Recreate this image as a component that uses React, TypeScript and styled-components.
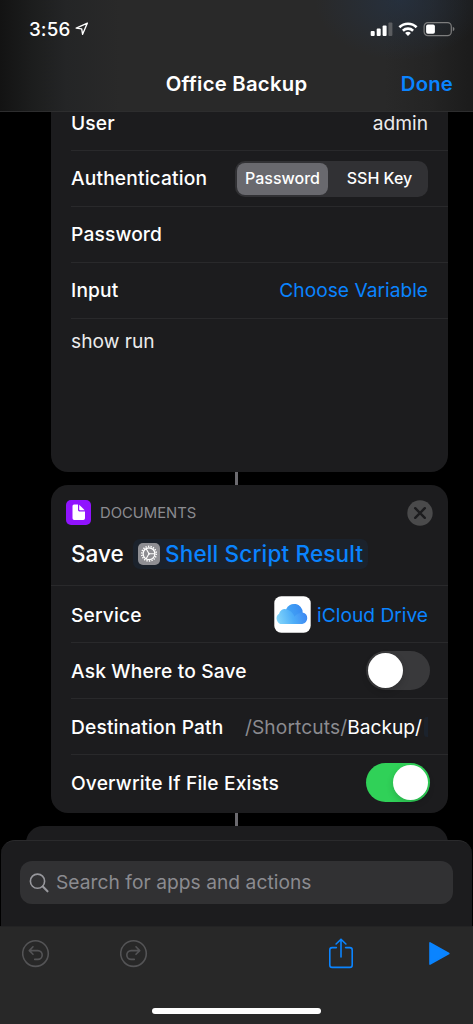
import React from "react";
import styled, { createGlobalStyle } from "styled-components";

const GlobalStyle = createGlobalStyle`
  * { box-sizing: border-box; }
  body { margin: 0; background: #000; }
`;

const Screen = styled.div`
  width: 473px;
  height: 1024px;
  overflow: hidden;
  display: flex;
  flex-direction: column;
  background: #000;
  color: #fff;
  font-family: Inter, "Liberation Sans", sans-serif;
  font-size: 19px;
`;

const Text = styled.span<{ $size?: number; $weight?: number; $track?: number; $color?: string; $lift?: number }>`
  font-size: ${(p) => p.$size ?? 19.2}px;
  font-weight: ${(p) => p.$weight ?? 400};
  letter-spacing: ${(p) => p.$track ?? 0}px;
  color: ${(p) => p.$color ?? "#fff"};
  line-height: 24px;
  padding-bottom: ${(p) => p.$lift ?? 0}px;
  white-space: pre;
`;

const Label = styled(Text).attrs({ $weight: 500, $track: 0.15 })``;

const Header = styled.header`
  height: 112px;
  flex: none;
  border-bottom: 1px solid #2d2d2e;
  background:
    radial-gradient(ellipse 85px 60px at 400px 0, rgba(37, 52, 72, 0.65), rgba(37, 52, 72, 0)),
    linear-gradient(90deg, #131313 0, #1c1d1d 32px, #242526 66px, #292929 120px, #292929 385px, #242424 430px, #1b1b1b 473px);
`;

const StatusBar = styled.div`
  height: 57px;
  padding: 1px 18px 0 29px;
  display: flex;
  align-items: center;
`;

const Clock = styled(Text)`
  padding-top: 2px;
`;

const LocationIcon = styled.svg`
  margin-left: 5px;
`;

const StatusIcons = styled.div`
  margin-left: auto;
  display: flex;
  align-items: center;
  gap: 5px;
`;

const NavBar = styled.nav`
  height: 53px;
  padding: 0 20px;
  display: grid;
  grid-template-columns: 80px 1fr 80px;
  align-items: center;
  text-align: center;
`;

const Done = styled.button`
  all: unset;
  text-align: right;
`;

const Editor = styled.main`
  height: 743px;
  flex: none;
  overflow: hidden;
  padding-right: 25px;
  display: flex;
  flex-direction: column;
`;

const Card = styled.section<{ $joined?: boolean }>`
  flex: none;
  margin-left: 51px;
  background: #1c1c1e;
  border-radius: ${(p) => (p.$joined ? "0 0 17px 17px" : "17px")};
`;

const NextCard = styled.section`
  flex: none;
  margin-left: 26px;
  height: 60px;
  background: #1c1c1e;
  border-radius: 17px;
`;

const Connector = styled.div`
  flex: none;
  width: 3px;
  height: 13px;
  margin-left: 235px;
  background: #6b6a6f;
`;

const Row = styled.div<{ $height: number; $last?: boolean; $right?: number; $top?: number; $bottom?: number }>`
  height: ${(p) => p.$height}px;
  margin-left: 20px;
  padding: ${(p) => p.$top ?? 0}px ${(p) => p.$right ?? 20}px ${(p) => p.$bottom ?? 0}px 0;
  display: flex;
  align-items: center;
  justify-content: space-between;
  border-bottom: ${(p) => (p.$last ? "none" : "1px solid #29292b")};
`;

const ScriptBody = styled.div`
  height: 153px;
  padding: 10px 20px;
`;

const Segmented = styled.div`
  width: 193px;
  height: 36px;
  padding: 2px;
  display: grid;
  grid-template-columns: 91px 1fr;
  column-gap: 5px;
  border-radius: 10px;
  background: #313134;
`;

const Segment = styled.button<{ $active?: boolean }>`
  all: unset;
  display: flex;
  align-items: center;
  justify-content: center;
  border-radius: 8px;
  background: ${(p) => (p.$active ? "#69696e" : "transparent")};
`;

const ActionHead = styled.div`
  height: 101px;
  padding: 15px 15px 0;
  border-bottom: 1px solid #29292b;
`;

const ActionTitle = styled.div`
  height: 25px;
  display: flex;
  align-items: center;
  gap: 9px;
`;

const CloseIcon = styled.svg`
  margin-left: auto;
`;

const ActionSummary = styled.div`
  height: 30px;
  margin-top: 14px;
  padding-left: 5px;
  display: flex;
  align-items: center;
  justify-content: space-between;
  width: 302px;
`;

const VariableToken = styled.span`
  height: 30px;
  width: 235px;
  padding-left: 5px;
  display: flex;
  align-items: center;
  gap: 5px;
  border-radius: 7px;
  background: #1b222c;
`;

const Service = styled.div`
  display: flex;
  align-items: center;
  gap: 6px;
`;

const AppIcon = styled.svg`
  display: block;
  flex: none;
`;

const PathField = styled.div`
  display: flex;
  align-items: center;
`;

const Caret = styled.span`
  width: 4px;
  height: 20px;
  margin-left: 2px;
  border-radius: 3px 0 0 3px;
  background: #1b222c;
`;

const Switch = styled.button<{ $on?: boolean }>`
  all: unset;
  box-sizing: border-box;
  width: 64px;
  height: 39px;
  padding: 2px;
  display: flex;
  justify-content: ${(p) => (p.$on ? "flex-end" : "flex-start")};
  border-radius: 20px;
  background: ${(p) => (p.$on ? "#30d158" : "#39393b")};
`;

const Knob = styled.span`
  width: 35px;
  height: 35px;
  border-radius: 50%;
  background: #fff;
  box-shadow: 0 3px 7px rgba(0, 0, 0, 0.16);
`;

const Footer = styled.footer`
  position: relative;
  flex: none;
  margin-top: -15px;
`;

const Drawer = styled.div`
  height: 86px;
  padding: 20px 19px 0;
  margin: 0 1px;
  background: #1c1c1e;
  border-top: 1px solid #2a2a2c;
  border-radius: 14px 14px 0 0;
`;

const Search = styled.div`
  height: 43px;
  padding-left: 9px;
  display: flex;
  align-items: center;
  gap: 7px;
  border-radius: 12px;
  background: #313133;
`;

const Toolbar = styled.div`
  height: 98px;
  background: #282828;
  border-top: 1px solid #232324;
`;

const Tools = styled.div`
  height: 54px;
  padding: 0 22px;
  display: flex;
  align-items: center;
`;

const Tool = styled.svg<{ $gap?: number }>`
  display: block;
  margin-left: ${(p) => p.$gap ?? 0}px;
`;

const HomeIndicator = styled.div`
  width: 169px;
  height: 6px;
  margin: 27px auto 0;
  border-radius: 3px;
  background: #fff;
`;

const BLUE = "#0a84ff";

function Toggle({ on }: { on?: boolean }) {
  return (
    <Switch $on={on} role="switch" aria-checked={!!on}>
      <Knob />
    </Switch>
  );
}

function Status() {
  return (
    <StatusBar>
      <Clock $size={18.8} $weight={500} $track={0.1}>3:56</Clock>
      <LocationIcon width="14" height="14" viewBox="0 0 14 14" fill="none" stroke="#fff" strokeWidth="1.35" strokeLinejoin="round">
        <path d="M12.4 1.1 1.2 6.2 6.7 6.9 7.6 12.3Z" />
      </LocationIcon>
      <StatusIcons>
        <svg width="23" height="16" viewBox="0 0 23 16">
          <rect x="0.7" y="10" width="4" height="5" rx="1" fill="#fff" />
          <rect x="6.7" y="7.5" width="4" height="7.5" rx="1" fill="#fff" />
          <rect x="12.6" y="4.4" width="4" height="10.6" rx="1" fill="#fff" />
          <rect x="18.4" y="1.4" width="4" height="13.6" rx="1" fill="#5b5d60" />
        </svg>
        <svg width="20" height="16" viewBox="0 0 20 16" fill="none" stroke="#fff" strokeWidth="2.6">
          <path d="M1.4 6.2C6.2 1.5 13.8 1.5 18.6 6.2" />
          <path d="M4.9 9.7C7.8 6.9 12.2 6.9 15.1 9.7" />
          <path d="M7.1 11.9C8.8 10.5 11.2 10.5 12.9 11.9L10 14.9Z" fill="#fff" stroke="none" />
        </svg>
        <svg width="32" height="16" viewBox="0 0 32 16">
          <rect x="1.1" y="1.6" width="27.2" height="13" rx="3.8" fill="none" stroke="#7d7d7d" strokeWidth="1.2" />
          <rect x="3.1" y="3.5" width="8.8" height="9.3" rx="1.8" fill="#fff" />
          <path d="M29.8 5.8Q31.5 6.5 31.5 8T29.8 10.3Z" fill="#7d7d7d" />
        </svg>
      </StatusIcons>
    </StatusBar>
  );
}

function GearIcon() {
  return (
    <AppIcon width="22" height="22" viewBox="0 0 22 22" fill="none" stroke="#fff">
      <rect width="22" height="22" rx="5" fill="#8e8e93" stroke="none" />
      <circle cx="11" cy="10.7" r="7.3" strokeWidth="1.6" strokeDasharray="1.3 1.248" />
      <circle cx="11" cy="10.7" r="5.9" strokeWidth="1.3" />
      <path d="M11 10.7H17M11 10.7 8 5.5M11 10.7 8 15.9" strokeWidth="1.1" />
      <circle cx="11" cy="10.7" r="1" fill="#fff" stroke="none" />
    </AppIcon>
  );
}

function CloudIcon() {
  return (
    <AppIcon width="37" height="37" viewBox="0 0 37 37">
      <defs>
        <linearGradient id="cloud" x1="0" y1="0.7" x2="1" y2="0.5">
          <stop offset="0" stopColor="#83d5fa" />
          <stop offset="0.5" stopColor="#4eaef8" />
          <stop offset="1" stopColor="#3d86f2" />
        </linearGradient>
      </defs>
      <rect x="0.3" y="0.3" width="36.4" height="36.4" rx="7" fill="#fff" />
      <path d="M9 28A5.6 5.6 0 0 1 5.1 17.8 5.5 5.5 0 0 1 12.2 13.3 8.5 8.5 0 0 1 28.6 16.4 5.9 5.9 0 0 1 28.2 28Z" fill="url(#cloud)" />
      <path d="M12.2 13.3A8.5 8.5 0 0 1 28.6 16.4Q23 17 20.5 20.5 18 14.8 12.2 13.3Z" fill="#2b86ee" opacity="0.35" />
    </AppIcon>
  );
}

export default function App() {
  return (
    <>
      <GlobalStyle />
      <Screen>
        <Header>
          <Status />
          <NavBar>
            <span />
            <Text $size={20.3} $weight={600} $track={0.26}>Office Backup</Text>
            <Done><Text $size={20.3} $weight={600} $track={0.2} $color={BLUE}>Done</Text></Done>
          </NavBar>
        </Header>

        <Editor>
          <Card $joined>
            <Row $height={39} $bottom={17}>
              <Label>User</Label>
              <Text $color="#ebebec">admin</Text>
            </Row>
            <Row $height={56}>
              <Label $lift={2}>Authentication</Label>
              <Segmented>
                <Segment $active><Text $size={16} $weight={500} $lift={2}>Password</Text></Segment>
                <Segment><Text $size={16} $weight={500} $lift={2}>SSH Key</Text></Segment>
              </Segmented>
            </Row>
            <Row $height={56}>
              <Label $lift={2}>Password</Label>
            </Row>
            <Row $height={56}>
              <Label $lift={2}>Input</Label>
              <Text $color={BLUE} $lift={2}>Choose Variable</Text>
            </Row>
            <ScriptBody>
              <Text $color="#ebebec">show run</Text>
            </ScriptBody>
          </Card>
          <Connector />
          <Card>
            <ActionHead>
              <ActionTitle>
                <AppIcon width="25" height="25" viewBox="0 0 25 25">
                  <rect width="25" height="25" rx="5" fill="#9013fe" />
                  <path d="M6.5 6Q6.5 4.5 8 4.5H12V10Q12 11.4 13.4 11.4H19V18.3Q19 20 17.3 20H8.2Q6.5 20 6.5 18.3Z" fill="#fff" />
                  <path d="M13.2 4.7 18.7 10.2H14Q13.2 10.2 13.2 9.4Z" fill="#fff" />
                </AppIcon>
                <Text $size={14.8} $color="#8b8b90">DOCUMENTS</Text>
                <CloseIcon width="26" height="26" viewBox="0 0 26 26">
                  <circle cx="13" cy="13" r="12.7" fill="#4a4a4b" />
                  <path d="M8.2 8.2 17.8 17.8M17.8 8.2 8.2 17.8" stroke="#1c1c1e" strokeWidth="2.4" strokeLinecap="round" />
                </CloseIcon>
              </ActionTitle>
              <ActionSummary>
                <Text $size={22.5} $weight={500}>Save</Text>
                <VariableToken>
                  <GearIcon />
                  <Text $size={22.5} $weight={500} $track={0.16} $color={BLUE}>Shell Script Result</Text>
                </VariableToken>
              </ActionSummary>
            </ActionHead>
            <Row $height={57} $top={1}>
              <Label>Service</Label>
              <Service>
                <CloudIcon />
                <Text $color={BLUE}>iCloud Drive</Text>
              </Service>
            </Row>
            <Row $height={56} $right={18}>
              <Label>Ask Where to Save</Label>
              <Toggle />
            </Row>
            <Row $height={56} $top={1}>
              <Label>Destination Path</Label>
              <PathField>
                <Text $track={0.1} $color="#8b8b90">/Shortcuts/</Text>
                <Text>Backup/</Text>
                <Caret />
              </PathField>
            </Row>
            <Row $height={58} $right={18} $bottom={3} $last>
              <Label>Overwrite If File Exists</Label>
              <Toggle on />
            </Row>
          </Card>
          <Connector />
          <NextCard />
        </Editor>

        <Footer>
          <Drawer>
            <Search>
              <svg width="20" height="20" viewBox="0 0 20 20" fill="none" stroke="#98989d" strokeLinecap="round">
                <circle cx="8.5" cy="8.2" r="7.1" strokeWidth="1.6" />
                <path d="M13.8 13.6 18.5 18.3" strokeWidth="2.1" />
              </svg>
              <Text $track={0.04} $color="#8b8b90" $lift={2}>Search for apps and actions</Text>
            </Search>
          </Drawer>
          <Toolbar>
            <Tools>
              <Tool width="28" height="28" viewBox="0 0 28 28" fill="none" stroke="#545456" strokeWidth="1.6" strokeLinecap="round" strokeLinejoin="round">
                <circle cx="13.5" cy="13.6" r="12.8" />
                <path d="M11 6.8 7.3 10.6 11 14.3M7.5 10.6H15.8A4.4 4.4 0 0 1 15.8 19.4H12.7" />
              </Tool>
              <Tool $gap={70} width="28" height="28" viewBox="0 0 28 28" fill="none" stroke="#545456" strokeWidth="1.6" strokeLinecap="round" strokeLinejoin="round">
                <circle cx="13.5" cy="13.6" r="12.8" />
                <path d="M16 6.8 19.7 10.6 16 14.3M19.5 10.6H11.2A4.4 4.4 0 0 0 11.2 19.4H14.3" />
              </Tool>
              <Tool $gap={180} width="26" height="32" viewBox="0 0 26 32" fill="none" stroke={BLUE} strokeWidth="1.6" strokeLinecap="round" strokeLinejoin="round">
                <path d="M8.4 9.6H4.1Q1.8 9.6 1.8 12V27Q1.8 29.4 4.1 29.4H21.9Q24.2 29.4 24.2 27V12Q24.2 9.6 21.9 9.6H17.6" />
                <path d="M13 19V1.4M8.1 6 13 1.2 17.9 6" />
              </Tool>
              <Tool $gap={74} width="22" height="24" viewBox="0 0 22 24">
                <path d="M2 0.9 20.8 11.5 2 22.1Z" fill={BLUE} stroke={BLUE} strokeWidth="1.6" strokeLinejoin="round" />
              </Tool>
            </Tools>
            <HomeIndicator />
          </Toolbar>
        </Footer>
      </Screen>
    </>
  );
}
